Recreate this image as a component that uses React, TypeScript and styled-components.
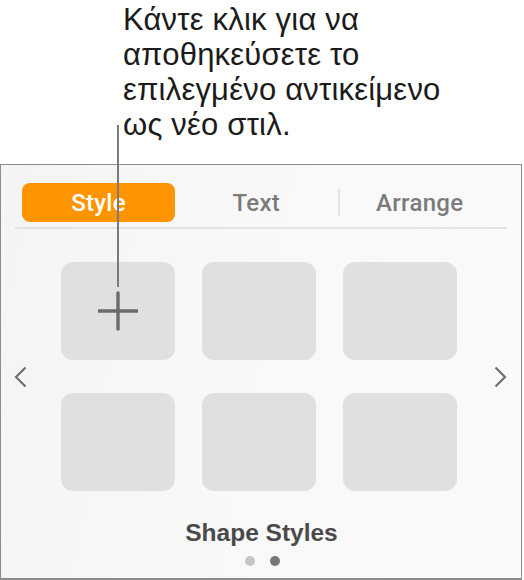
import React from "react";
import styled, { createGlobalStyle } from "styled-components";

const GlobalStyle = createGlobalStyle`
  html, body {
    margin: 0;
    padding: 0;
    background: #ffffff;
  }
  body {
    font-family: "Liberation Sans", Arial, sans-serif;
  }
`;

const Page = styled.div`
  position: relative;
  width: 524px;
  height: 580px;
  display: flex;
  flex-direction: column;
  overflow: hidden;
`;

const Callout = styled.div`
  height: 164px;
  box-sizing: border-box;
  padding: 2px 0 0 123px;
  font-family: "Liberation Sans", Arial, sans-serif;
  font-size: 31px;
  line-height: 35px;
  letter-spacing: 0.2px;
  color: #1b1b1b;
  white-space: nowrap;
`;

const Leader = styled.div`
  position: absolute;
  left: 117px;
  top: 125px;
  width: 2px;
  height: 162px;
  background: #7a7a7a;
  z-index: 2;
`;

const Panel = styled.section`
  width: 522px;
  flex: 1;
  box-sizing: border-box;
  border: 1.5px solid #8c8c8c;
  border-bottom-width: 2px;
  background: linear-gradient(100deg, #f3f4f4 0%, #f8f8f8 40%, #fafafa 100%);
  display: flex;
  flex-direction: column;
  align-items: stretch;
`;

const TabBar = styled.div`
  margin: 18px 14px 0 14px;
  padding: 0 7px 5px 7px;
  border-bottom: 2px solid #e3e3e3;
  display: grid;
  grid-template-columns: 153px 1fr 1fr;
  align-items: center;
`;

const Tab = styled.div<{ $active?: boolean; $divider?: boolean }>`
  height: 39px;
  display: flex;
  align-items: center;
  justify-content: center;
  border-radius: 8px;
  font-family: Roboto, "Liberation Sans", sans-serif;
  font-weight: 500;
  font-size: 24px;
  letter-spacing: 0.3px;
  color: ${(p) => (p.$active ? "#ffffff" : "#7b7b7b")};
  background: ${(p) => (p.$active ? "#fe9500" : "transparent")};
  border-left: ${(p) => (p.$divider ? "2px solid #e2e2e2" : "none")};
  ${(p) => (p.$divider ? "border-radius: 0; height: 27px;" : "")}
`;

const Carousel = styled.div`
  margin-top: 33px;
  padding: 0 14px 0 13px;
  display: flex;
  align-items: center;
  justify-content: space-between;
`;

const Grid = styled.div`
  display: grid;
  grid-template-columns: repeat(3, 114px);
  grid-auto-rows: 98px;
  column-gap: 27px;
  row-gap: 33px;
  margin-right: 4px;
`;

const Tile = styled.div`
  border-radius: 12px;
  background: #e0e0e0;
  display: flex;
  align-items: center;
  justify-content: center;
`;

const Chevron = styled.svg`
  width: 13px;
  height: 22px;
  flex: none;
`;

const Footer = styled.div`
  margin-top: 28px;
  display: flex;
  flex-direction: column;
  align-items: center;
`;

const Title = styled.div`
  font-family: "Liberation Sans", Arial, sans-serif;
  font-weight: 700;
  font-size: 24.5px;
  line-height: 28px;
  color: #4a4a4a;
  margin-left: 1px;
`;

const Dots = styled.div`
  margin-top: 9px;
  display: flex;
  gap: 15px;
  margin-left: 2px;
`;

const Dot = styled.span<{ $on?: boolean }>`
  width: 10px;
  height: 10px;
  border-radius: 50%;
  background: ${(p) => (p.$on ? "#777777" : "#c6c6c6")};
`;

function Plus() {
  return (
    <svg width="40" height="40" viewBox="0 0 40 40">
      <path
        d="M20 2V38M1 20H39"
        stroke="#6a6a6a"
        strokeWidth="3.4"
        strokeLinecap="round"
      />
    </svg>
  );
}

export default function App() {
  return (
    <Page>
      <GlobalStyle />
      <Callout>
        Κάντε κλικ για να
        <br />
        αποθηκεύσετε το
        <br />
        επιλεγμένο αντικείμενο
        <br />
        ως νέο στιλ.
      </Callout>
      <Leader />
      <Panel>
        <TabBar>
          <Tab $active>Style</Tab>
          <Tab>Text</Tab>
          <Tab $divider>Arrange</Tab>
        </TabBar>
        <Carousel>
          <Chevron viewBox="0 0 13 22">
            <path d="M11.5 1.5L2 11L11.5 20.5" fill="none" stroke="#707070" strokeWidth="2.2" />
          </Chevron>
          <Grid>
            <Tile>
              <Plus />
            </Tile>
            <Tile />
            <Tile />
            <Tile />
            <Tile />
            <Tile />
          </Grid>
          <Chevron viewBox="0 0 13 22">
            <path d="M1.5 1.5L11 11L1.5 20.5" fill="none" stroke="#707070" strokeWidth="2.2" />
          </Chevron>
        </Carousel>
        <Footer>
          <Title>Shape Styles</Title>
          <Dots>
            <Dot />
            <Dot $on />
          </Dots>
        </Footer>
      </Panel>
    </Page>
  );
}
